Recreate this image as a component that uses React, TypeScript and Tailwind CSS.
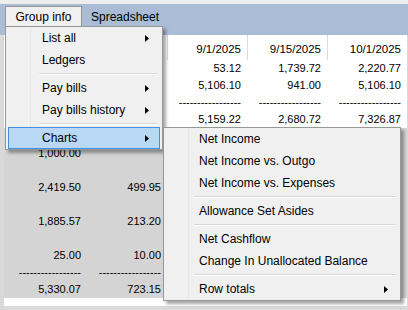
import React from "react";

const Arrow = () => (
  <svg width="4" height="7" viewBox="0 0 4 7" className="block">
    <polygon points="0,0 4,3.5 0,7" fill="#000" />
  </svg>
);

type Item = { label?: string; sub?: boolean; sep?: boolean; active?: boolean };

const Menu = ({
  items,
  textPad,
  sepLeft,
  arrowRight,
  className,
}: {
  items: Item[];
  textPad: string;
  sepLeft: string;
  arrowRight: string;
  className: string;
}) => (
  <div
    className={`absolute bg-[#f0f0f0] border border-[#979797] shadow-[3px_3px_3px_rgba(0,0,0,0.35)] ${className}`}
  >
    <div className="absolute top-0 bottom-0 left-[24px] w-px bg-[#e7e7e7]" />
    {items.map((it, i) =>
      it.sep ? (
        <div key={i} className={`relative h-[6px] flex flex-col justify-center ${sepLeft} pr-[4px]`}>
          <div className="h-px bg-[#d7d7d7]" />
          <div className="h-px bg-white" />
        </div>
      ) : (
        <div key={i} className="relative h-[22px] px-[2px]">
          <div
            className={`h-full flex items-center ${textPad} ${arrowRight} border ${
              it.active ? "bg-[#b9d8f3] border-[#3f91dc]" : "border-transparent"
            }`}
          >
            <span className="flex-1 whitespace-nowrap">{it.label}</span>
            {it.sub && <Arrow />}
          </div>
        </div>
      )
    )}
  </div>
);

const DASH = "-----------------";

type Row = { cells: string[]; gray?: boolean; header?: boolean };

const rows: Row[] = [
  { cells: ["", "", "9/1/2025", "9/15/2025", "10/1/2025"], header: true },
  { cells: ["", "", "53.12", "1,739.72", "2,220.77"] },
  { cells: ["", "", "5,106.10", "941.00", "5,106.10"] },
  { cells: ["", "", DASH, DASH, DASH] },
  { cells: ["", "", "5,159.22", "2,680.72", "7,326.87"] },
  { cells: ["", "", "", "", ""], gray: true },
  { cells: ["1,000.00", "", "", "", ""], gray: true },
  { cells: ["", "", "", "", ""], gray: true },
  { cells: ["2,419.50", "499.95", "", "", ""], gray: true },
  { cells: ["", "", "", "", ""], gray: true },
  { cells: ["1,885.57", "213.20", "", "", ""], gray: true },
  { cells: ["", "", "", "", ""], gray: true },
  { cells: ["25.00", "10.00", "", "", ""], gray: true },
  { cells: [DASH, DASH, "", "", ""], gray: true },
  { cells: ["5,330.07", "723.15", "", "", ""], gray: true },
];

export default function App() {
  return (
    <div className="w-[408px] h-[310px] relative overflow-hidden bg-[#d9d9d9] font-['Liberation_Sans',Arial,sans-serif] text-black">
      <div className="h-[4px] bg-[#eeeeee]" />
      {/* menu bar */}
      <div className="h-[31px] bg-[#aabcd6] flex items-start pt-[2px] pl-[5px] text-[12px]">
        <div className="h-[21px] w-[77px] flex items-center justify-center bg-[#f0f0f0] border border-[#979797] border-b-0">
          Group info
        </div>
        <div className="h-[21px] flex items-center pl-[9px]">Spreadsheet</div>
      </div>
      {/* grid */}
      <div className="ml-[4px] w-[403px] h-[271px] bg-white">
        {rows.map((r, i) => (
          <div
            key={i}
            className={`grid grid-cols-[83px_80px_80px_80px_80px] ${
              r.header ? "h-[25px] text-[11.5px]" : "h-[17px] text-[11px]"
            } ${r.gray ? "bg-[#d4d4d4]" : ""}`}
          >
            {r.cells.map((c, j) => (
              <div
                key={j}
                className={`flex items-center justify-end pr-[6px] whitespace-nowrap overflow-hidden ${
                  r.header && j > 0 ? "border-l border-[#dcdcdc]" : ""
                } ${r.header ? "pt-[4px]" : ""}`}
              >
                {c}
              </div>
            ))}
          </div>
        ))}
      </div>

      {/* Group info dropdown */}
      <Menu
        className="left-[5px] top-[26px] w-[158px] text-[12px]"
        textPad="pl-[33px]"
        sepLeft="pl-[33px]"
        arrowRight="pr-[10px]"
        items={[
          { label: "List all", sub: true },
          { label: "Ledgers" },
          { sep: true },
          { label: "Pay bills", sub: true },
          { label: "Pay bills history", sub: true },
          { sep: true },
          { label: "Charts", sub: true, active: true },
        ]}
      />

      {/* Charts submenu */}
      <Menu
        className="left-[163px] top-[127px] w-[238px] text-[12px]"
        textPad="pl-[32px]"
        sepLeft="pl-[30px]"
        arrowRight="pr-[9px]"
        items={[
          { label: "Net Income" },
          { label: "Net Income vs. Outgo" },
          { label: "Net Income vs. Expenses" },
          { sep: true },
          { label: "Allowance Set Asides" },
          { sep: true },
          { label: "Net Cashflow" },
          { label: "Change In Unallocated Balance" },
          { sep: true },
          { label: "Row totals", sub: true },
        ]}
      />
    </div>
  );
}
